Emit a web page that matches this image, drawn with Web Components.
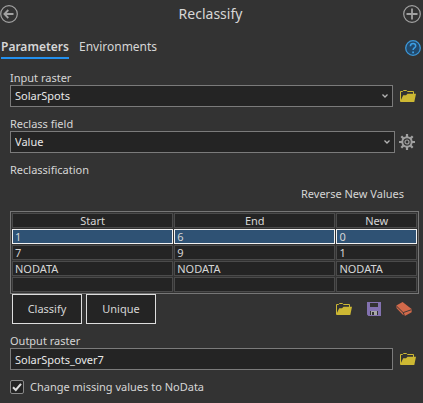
<!DOCTYPE html>
<html lang="en">
<head>
<meta charset="utf-8">
<meta name="viewport" content="width=device-width, initial-scale=1">
<title>Reclassify</title>
<style>
html { background: #333333; }
body { margin: 0; font: 11px/14px "Noto Sans", "Open Sans", sans-serif; color: #d6d6d6; }
</style>
</head>
<body>
<reclassify-pane></reclassify-pane>

<script>
const ICONS = {
  back: [18, '<g fill="none" stroke="#a2a2a2"><circle cx="9" cy="9" r="8.3" stroke-width="1.2"/><path d="M4.5 9H13.5M8.3 5L4.4 9L8.3 13" stroke-width="1.8"/></g>'],
  plus: [18, '<g fill="none" stroke="#a2a2a2"><circle cx="9" cy="9" r="8.3" stroke-width="1.2"/><path d="M3.5 9H14.5M9 3.5V14.5" stroke-width="1.8"/></g>'],
  help: [16, '<circle cx="8" cy="8" r="7.3" fill="#22496b" stroke="#3c97d8" stroke-width="1.3"/><path d="M5.4 6.2C5.4 4.4 6.5 3.6 8.1 3.6C9.7 3.6 10.7 4.5 10.7 5.9C10.7 7.9 8.1 8 8.1 10.1" fill="none" stroke="#3c9fe4" stroke-width="1.5"/><path d="M7.2 11.4h1.8v1.8H7.2z" fill="#3c9fe4"/>'],
  folder: [16, '<path d="M0.5 13V3.5H2.5L3.5 2.5H6.5L7.5 3.5H13.5V6" fill="none" stroke="#cdb833"/><path d="M0 14L3.2 7.2H6L7.5 5.8H16L14.3 14Z" fill="#cdb833"/>'],
  gear: [16, '<g fill="none" stroke="#a0a0a0"><circle cx="8" cy="8" r="4.7" stroke-width="2"/><circle cx="8" cy="8" r="2" stroke-width="1.2"/><path d="M8 0V3M8 13V16M0 8H3M13 8H16M2.3 2.3L4.4 4.4M11.6 11.6L13.7 13.7M13.7 2.3L11.6 4.4M4.4 11.6L2.3 13.7" stroke-width="2.2"/></g>'],
  save: [16, '<path fill-rule="evenodd" d="M1 1H15V15H2.4L1 13.6ZM4 2V6H12V2ZM4 10V14H12V10Z" fill="#8372b0"/><path d="M5 10H11V14H5Z" fill="#a8a8a8"/><path d="M6 11H8V14H6Z" fill="#333333"/>'],
  erase: [16, '<path d="M0.3 4.4L6.6 1L15.6 8V11.2L9.3 14.8L6.8 13.8L0.6 7.2Z" fill="#d2694a"/><path d="M0.6 5.2L7.2 11.6L15.5 8.7M7.2 11.6L8.4 14.4" fill="none" stroke="#333333" stroke-width="0.9"/>']
};

const define = (tag, css, html, setup) => {
  const template = document.createElement('template');
  template.innerHTML = `<style>*{box-sizing:border-box}[hidden]{display:none}${css}</style>${html}`;
  customElements.define(tag, class extends HTMLElement {
    connectedCallback() {
      if (this.shadowRoot) return;
      const root = this.attachShadow({ mode: 'open' });
      root.append(template.content.cloneNode(true));
      if (setup) setup(this, root);
    }
  });
};

define('icon-button', `
  :host { display: inline-flex; flex: none; }
  button { display: flex; margin: 0; padding: 0; border: 0; background: none; }
  svg { display: block; }`,
  '<button type="button"></button>',
  (host, root) => {
    const [size, art] = ICONS[host.getAttribute('icon')];
    const button = root.querySelector('button');
    button.setAttribute('aria-label', host.getAttribute('label'));
    button.innerHTML = `<svg width="${size}" height="${size}" viewBox="0 0 ${size} ${size}" aria-hidden="true">${art}</svg>`;
  });

define('pane-header', `
  :host { display: grid; grid-template-columns: 18px 1fr 18px; align-items: center; height: 28px; padding-right: 2px; }
  h1 { margin: 0; text-align: center; font-size: 14px; line-height: 20px; font-weight: 400; }`,
  `<icon-button icon="back" label="Back"></icon-button>
   <h1><slot></slot></h1>
   <icon-button icon="plus" label="Add"></icon-button>`);

define('pane-tabs', `
  :host { display: flex; align-items: center; justify-content: space-between; padding: 9px 2px 12px 1px; }
  nav { display: flex; gap: 10px; }
  a { color: inherit; text-decoration: none; font-size: 12px; line-height: 20px; border-bottom: 2px solid transparent; }
  a[aria-current] { font-weight: 600; border-color: #2490ee; }`,
  `<nav><a href="#parameters" aria-current="page">Parameters</a><a href="#environments">Environments</a></nav>
   <icon-button icon="help" label="Help"></icon-button>`);

define('param-field', `
  :host { display: block; padding-right: 3px; }
  label { display: block; }
  .row { display: flex; align-items: center; gap: 7px; }
  :host([snug]) { padding-right: 4px; }
  :host([snug]) .row { gap: 4px; }
  .box { position: relative; flex: 1; min-width: 0; display: flex; }
  select, input { appearance: none; flex: 1; min-width: 0; height: 22px; margin: 0; padding: 0 4px; border: 1px solid #7b7b7b; border-radius: 0; background: #242424; color: #e8e8e8; font: inherit; outline: 0; }
  .box svg { position: absolute; right: 5px; top: 8px; pointer-events: none; }`,
  `<label for="control"></label>
   <div class="row"><div class="box"></div><slot></slot></div>`,
  (host, root) => {
    root.querySelector('label').textContent = host.getAttribute('label');
    const select = host.getAttribute('kind') === 'select';
    const control = document.createElement(select ? 'select' : 'input');
    control.id = 'control';
    const value = host.getAttribute('value');
    if (select) control.add(new Option(value)); else { control.type = 'text'; control.value = value; }
    const box = root.querySelector('.box');
    box.append(control);
    if (select) box.insertAdjacentHTML('beforeend', '<svg width="6" height="6" viewBox="0 0 6 6" aria-hidden="true"><path d="M0.5 1.5L3 4L5.5 1.5" fill="none" stroke="#b4b4b4" stroke-width="1.3"/></svg>');
  });

define('reclass-table', `
  :host { display: block; }
  table { width: 100%; table-layout: fixed; border: 1px solid #777777; border-spacing: 1px; background: #333333; }
  th, td { height: 15px; padding: 0 2px; border: 1px solid #4b4b4b; background: #242424; font-weight: 400; line-height: 13px; text-align: left; white-space: nowrap; overflow: hidden; }
  th { text-align: center; }
  th:last-child { width: 20%; }
  .selected td { background: #2f5274; border-color: #f2f2f2; }`,
  `<table>
    <thead><tr><th scope="col">Start</th><th scope="col">End</th><th scope="col">New</th></tr></thead>
    <tbody>
      <tr class="selected"><td>1</td><td>6</td><td>0</td></tr>
      <tr><td>7</td><td>9</td><td>1</td></tr>
      <tr><td>NODATA</td><td>NODATA</td><td>NODATA</td></tr>
      <tr><td></td><td></td><td></td></tr>
    </tbody>
  </table>`);

define('push-button', `
  :host { display: inline-flex; }
  button { min-width: 70px; height: 30px; padding: 0 8px; border: 1px solid #dedede; border-radius: 0; background: #242424; color: inherit; font: inherit; }
  :host([flat]) button { min-width: 0; height: 14px; padding: 0; border: 0; background: none; }`,
  '<button type="button"><slot></slot></button>');

define('check-option', `
  :host { display: block; }
  label { display: flex; align-items: center; gap: 6px; }
  .mark { display: grid; }
  .mark > * { grid-area: 1 / 1; }
  input { appearance: none; width: 14px; height: 14px; margin: 0; border: 1px solid #8a8a8a; border-radius: 2px; background: #242424; }
  svg { pointer-events: none; }
  input:not(:checked) + svg { visibility: hidden; }`,
  `<label><span class="mark"><input type="checkbox" checked><svg width="14" height="14" viewBox="0 0 14 14" aria-hidden="true"><path d="M3 7.2L5.8 10L11 3.8" fill="none" stroke="#dddddd" stroke-width="2"/></svg></span><span><slot></slot></span></label>`);

define('reclassify-pane', `
  :host { display: block; }
  main { display: flex; flex-direction: column; gap: 10px; padding: 0 4px 0 10px; }
  .reverse { align-self: flex-end; margin-right: 15px; }
  .actions { display: flex; align-items: center; justify-content: space-between; padding: 0 7px 0 2px; }
  .group { display: flex; gap: 4px; }
  .tools { display: flex; gap: 14px; }`,
  `<pane-header>Reclassify</pane-header>
   <pane-tabs></pane-tabs>
   <main>
     <param-field kind="select" label="Input raster" value="SolarSpots"><icon-button icon="folder" label="Browse input raster"></icon-button></param-field>
     <param-field snug kind="select" label="Reclass field" value="Value"><icon-button icon="gear" label="Field options"></icon-button></param-field>
     <div>Reclassification</div>
     <push-button flat class="reverse">Reverse New Values</push-button>
     <div>
       <reclass-table></reclass-table>
       <div class="actions">
         <div class="group"><push-button>Classify</push-button><push-button>Unique</push-button></div>
         <div class="tools"><icon-button icon="folder" label="Load table"></icon-button><icon-button icon="save" label="Save table"></icon-button><icon-button icon="erase" label="Clear table"></icon-button></div>
       </div>
     </div>
     <param-field kind="text" label="Output raster" value="SolarSpots_over7"><icon-button icon="folder" label="Browse output raster"></icon-button></param-field>
     <check-option>Change missing values to NoData</check-option>
   </main>`);
</script>
</body>
</html>
